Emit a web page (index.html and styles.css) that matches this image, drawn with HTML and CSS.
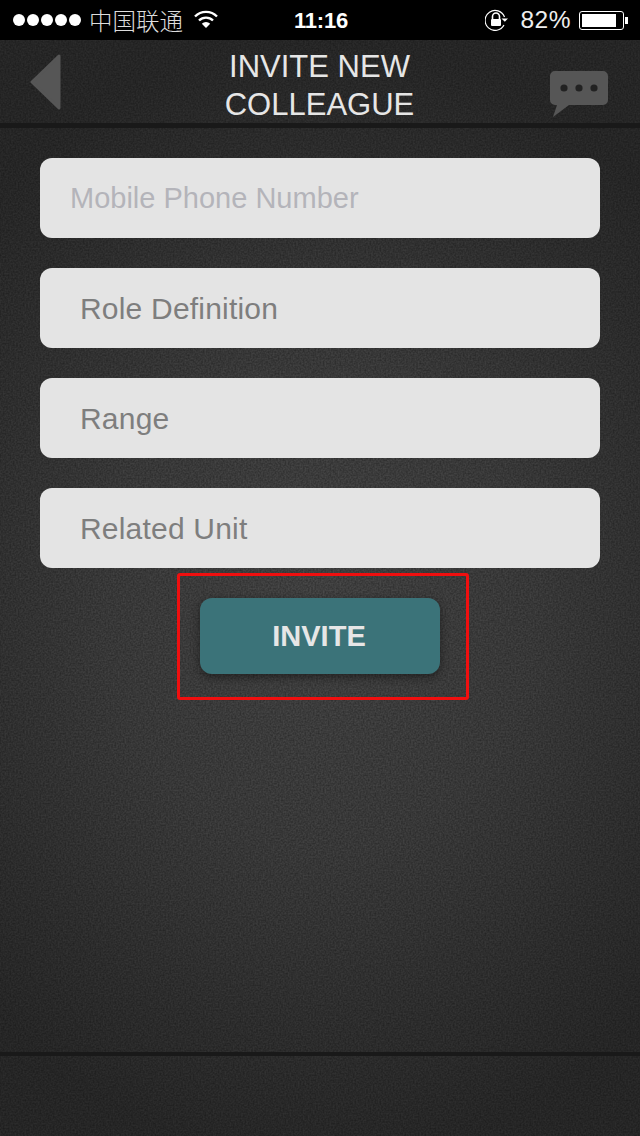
FILE: index.html
```html
<!DOCTYPE html>
<html lang="en">
<head>
  <meta charset="UTF-8">
  <title>Invite New Colleague</title>
  <link rel="stylesheet" href="styles.css">
</head>
<body>
  <div class="status-bar">
    <div class="status-left">
      <div class="signal"><i></i><i></i><i></i><i></i><i></i></div>
      <span class="carrier">中国联通</span>
      <svg class="wifi" width="24" height="18" viewBox="0 0 24 18">
        <path d="M1 6.500a15.500 15.500 0 0 1 22 0" fill="none" stroke="#fff" stroke-width="2.400"/>
        <path d="M5 10.500a10 10 0 0 1 14 0" fill="none" stroke="#fff" stroke-width="2.400"/>
        <path d="M12 18l-4.200-4.200a6 6 0 0 1 8.400 0z" fill="#fff"/>
      </svg>
    </div>
    <div class="time">11:16</div>
    <div class="status-right">
      <svg class="lock" width="24" height="22" viewBox="0 0 24 22">
        <path d="M19.500 8A10 10 0 1 0 19 16" fill="none" stroke="#fff" stroke-width="1.200"/>
        <path d="M16.500 9.500h6.500l-3.200 3.300z" fill="#fff"/>
        <path d="M7.500 10V7.500a3.500 3.500 0 0 1 7 0V10" fill="none" stroke="#fff" stroke-width="1.600"/>
        <rect x="6" y="10" width="10" height="7" rx="1" fill="#fff"/>
      </svg>
      <span class="percent">82%</span>
      <div class="battery"><div class="battery-level"></div></div>
      <div class="battery-nub"></div>
    </div>
  </div>

  <div class="screen">
    <svg class="noise" width="640" height="1096">
      <filter id="grain" x="0" y="0" width="100%" height="100%">
        <feTurbulence type="fractalNoise" baseFrequency="0.6" numOctaves="1" seed="4"/>
        <feColorMatrix type="matrix" values="0 0 0 0 0  0 0 0 0 0  0 0 0 0 0  0.600 0 0 0 -0.150"/>
      </filter>
      <rect width="640" height="1096" filter="url(#grain)"/>
    </svg>

    <header class="nav">
      <svg class="back" width="32" height="58" viewBox="0 0 32 58">
        <path d="M29 3v52L2 29z" fill="#565656" stroke="#565656" stroke-width="3" stroke-linejoin="round"/>
      </svg>
      <h1 class="title">INVITE NEW<br>COLLEAGUE</h1>
      <svg class="chat" width="60" height="48" viewBox="0 0 60 48">
        <path d="M6 1h48a5 5 0 0 1 5 5v24a5 5 0 0 1-5 5H20L4 47l4-12H6a5 5 0 0 1-5-5V6a5 5 0 0 1 5-5z" fill="#565656"/>
        <circle cx="15" cy="18" r="3.600" fill="#222"/>
        <circle cx="30" cy="18" r="3.600" fill="#222"/>
        <circle cx="45" cy="18" r="3.600" fill="#222"/>
      </svg>
    </header>

    <main class="form">
      <div class="field placeholder">Mobile Phone Number</div>
      <div class="field picker">Role Definition</div>
      <div class="field picker">Range</div>
      <div class="field picker">Related Unit</div>
      <div class="highlight">
        <div class="invite-btn">INVITE</div>
      </div>
    </main>

    <footer class="tab-bar"></footer>
  </div>
</body>
</html>
```

FILE: styles.css
```css
html, body {
  margin: 0;
  height: 100%;
}

body {
  width: 640px;
  height: 1136px;
  overflow: hidden;
  background: #000;
  font-family: "Liberation Sans", Arial, sans-serif;
  display: flex;
  flex-direction: column;
}

/* status bar */
.status-bar {
  height: 40px;
  flex: none;
  background: #000;
  color: #fff;
  display: flex;
  align-items: center;
  justify-content: space-between;
  padding: 0 12px 0 13px;
  box-sizing: border-box;
  position: relative;
}

.status-left,
.status-right {
  display: flex;
  align-items: center;
}

.signal {
  display: flex;
  gap: 2px;
}

.signal i {
  width: 12px;
  height: 12px;
  border-radius: 50%;
  background: #fff;
}

.carrier {
  margin-left: 8px;
  font-family: "Noto Sans CJK SC", sans-serif;
  font-size: 23.5px;
  font-weight: 300;
  color: #ddd;
  line-height: 40px;
}

.wifi {
  margin-left: 11px;
  margin-top: -2px;
}

.time {
  position: absolute;
  left: 294px;
  top: 0;
  font-size: 22px;
  font-weight: bold;
  line-height: 41px;
  letter-spacing: -0.2px;
}

.lock {
  margin-right: 11px;
}

.percent {
  font-size: 24.5px;
  letter-spacing: 0.5px;
  line-height: 40px;
  margin-right: 8px;
  color: #eee;
}

.battery {
  width: 45px;
  height: 19px;
  box-sizing: border-box;
  border: 1px solid #fff;
  border-radius: 3px;
  padding: 2px;
}

.battery-level {
  width: 34px;
  height: 13px;
  background: #fff;
}

.battery-nub {
  width: 3px;
  height: 7px;
  background: #fff;
  margin-left: 1px;
}

/* textured screen */
.screen {
  flex: 1;
  position: relative;
  display: flex;
  flex-direction: column;
  background: radial-gradient(ellipse 480px 560px at 320px 560px, #4a4a4a 0%, #414141 45%, #333 80%, #2c2c2c 100%);
}

.noise {
  position: absolute;
  left: 0;
  top: 0;
  pointer-events: none;
}

.nav {
  position: relative;
  height: 83px;
  flex: none;
  border-bottom: 5px solid #191919;
  display: flex;
  align-items: flex-start;
  justify-content: space-between;
  padding: 0 31px 0 30px;
}

.back {
  margin-top: 13px;
  margin-right: 28px;
}

.title {
  margin: 8px 0 0;
  font-size: 31px;
  font-weight: normal;
  line-height: 38px;
  color: #e6e6e6;
  text-align: center;
}

.chat {
  margin-top: 30px;
}

.form {
  position: relative;
  flex: 1;
  display: flex;
  flex-direction: column;
  align-items: center;
  padding-top: 30px;
}

.field {
  width: 560px;
  height: 80px;
  flex: none;
  box-sizing: border-box;
  background: #e4e4e4;
  border-radius: 12px;
  margin-bottom: 30px;
  line-height: 80px;
}

.placeholder {
  padding-left: 30px;
  font-size: 29px;
  color: #b4b4ba;
}

.picker {
  padding-left: 40px;
  font-size: 30px;
  letter-spacing: 0.2px;
  line-height: 81px;
  color: #7e7e7e;
}

.highlight {
  width: 292px;
  height: 127px;
  box-sizing: border-box;
  margin-top: -25px;
  margin-left: 6px;
  padding: 22px 26px 0 20px;
  border: 3px solid #f00f0f;
  border-radius: 3px;
}

.invite-btn {
  width: 240px;
  height: 76px;
  background: #3b7379;
  border-radius: 12px;
  box-shadow: 0 3px 10px rgba(0, 0, 0, 0.45);
  color: #e6e6e6;
  font-size: 29px;
  font-weight: bold;
  line-height: 77px;
  text-align: center;
  text-indent: -2px;
}

.tab-bar {
  position: relative;
  height: 80px;
  flex: none;
  border-top: 4px solid #191919;
}
```
